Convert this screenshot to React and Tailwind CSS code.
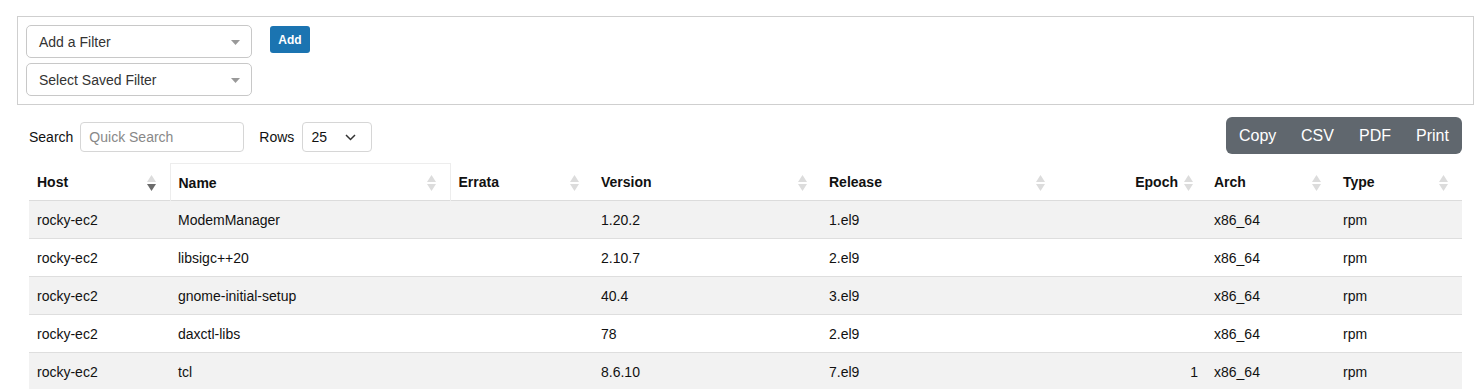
import React from "react";

const columns = [
  { key: "host", label: "Host", width: "w-[141px]", sorted: true },
  { key: "name", label: "Name", width: "w-[280px]", focused: true },
  { key: "errata", label: "Errata", width: "w-[143px]" },
  { key: "version", label: "Version", width: "w-[228px]" },
  { key: "release", label: "Release", width: "w-[238px]" },
  { key: "epoch", label: "Epoch", width: "w-[147px]", right: true },
  { key: "arch", label: "Arch", width: "w-[129px]" },
  { key: "type", label: "Type", width: "w-[127px]" },
];

const rows = [
  { host: "rocky-ec2", name: "ModemManager", errata: "", version: "1.20.2", release: "1.el9", epoch: "", arch: "x86_64", type: "rpm" },
  { host: "rocky-ec2", name: "libsigc++20", errata: "", version: "2.10.7", release: "2.el9", epoch: "", arch: "x86_64", type: "rpm" },
  { host: "rocky-ec2", name: "gnome-initial-setup", errata: "", version: "40.4", release: "3.el9", epoch: "", arch: "x86_64", type: "rpm" },
  { host: "rocky-ec2", name: "daxctl-libs", errata: "", version: "78", release: "2.el9", epoch: "", arch: "x86_64", type: "rpm" },
  { host: "rocky-ec2", name: "tcl", errata: "", version: "8.6.10", release: "7.el9", epoch: "1", arch: "x86_64", type: "rpm" },
];

// petit losange de tri (haut / bas)
function SortIcon({ desc }) {
  return (
    <svg width="9" height="16" viewBox="0 0 9 16" className="shrink-0">
      <path d="M4.5 0 L9 7 L0 7 Z" fill="#dcdcdc" />
      <path d="M0 9 L9 9 L4.5 16 Z" fill={desc ? "#6b6b6b" : "#dcdcdc"} />
    </svg>
  );
}

function Caret() {
  return (
    <svg width="9" height="5" viewBox="0 0 9 5">
      <path d="M0 0 L9 0 L4.5 5 Z" fill="#999" />
    </svg>
  );
}

function FilterSelect({ label }) {
  return (
    <div className="flex h-[33px] w-[226px] items-center justify-between rounded-[5px] border border-[#c8c8c8] bg-white pl-[12px] pr-[11px] pt-[1px] text-[14px] text-[#333]">
      <span>{label}</span>
      <Caret />
    </div>
  );
}

function FilterBox() {
  return (
    <div className="ml-[17px] mt-[16px] w-[1457px] border border-[#cfcfcf] px-[8px] pb-[8px] pt-[8px]">
      <div className="flex items-start gap-[18px]">
        <div className="flex flex-col gap-[5px]">
          <FilterSelect label="Add a Filter" />
          <FilterSelect label="Select Saved Filter" />
        </div>
        <button className="mt-[1px] h-[27px] w-[40px] rounded-[3px] bg-[#1b74b1] text-[12px] font-bold text-white">
          Add
        </button>
      </div>
    </div>
  );
}

function Toolbar() {
  return (
    <div className="ml-[29px] mr-[21px] mt-[12px] flex items-center justify-between">
      <div className="flex items-center pt-[3px] text-[14px] text-[#111]">
        <span className="mr-[7px]">Search</span>
        <div className="flex h-[30px] w-[164px] items-center rounded-[4px] border border-[#d6d6d6] pl-[8px] text-[14px] text-[#888]">
          Quick Search
        </div>
        <span className="ml-[15px] mr-[8px]">Rows</span>
        <div className="flex h-[30px] w-[70px] items-center justify-between rounded-[4px] border border-[#d6d6d6] pl-[8px] pr-[15px]">
          <span>25</span>
          <svg width="11" height="7" viewBox="0 0 11 7">
            <path d="M1 1 L5.5 5.5 L10 1" fill="none" stroke="#333" strokeWidth="1.5" />
          </svg>
        </div>
      </div>
      <div className="flex h-[37px] w-[236px] items-center rounded-[6px] bg-[#60676e] pl-[13px] text-[16px] text-white">
        <span className="w-[62px]">Copy</span>
        <span className="w-[58px]">CSV</span>
        <span className="w-[57px]">PDF</span>
        <span>Print</span>
      </div>
    </div>
  );
}

function PackageTable() {
  return (
    <table className="ml-[29px] mt-[9px] w-[1433px] table-fixed border-collapse text-[14px] text-[#111]">
      <thead>
        <tr className="h-[37px] border-b border-[#dcdcdc]">
          {columns.map((col) => (
            <th
              key={col.key}
              className={`${col.width} p-0 pt-[2px] text-left font-bold ${
                col.focused ? "border-x border-t border-[#ededed]" : ""
              }`}
            >
              {col.right ? (
                <div className="flex items-center justify-end gap-[6px] pr-[13px]">
                  <span>{col.label}</span>
                  <SortIcon />
                </div>
              ) : (
                <div className="flex items-center justify-between pl-[8px] pr-[14px]">
                  <span>{col.label}</span>
                  <SortIcon desc={col.sorted} />
                </div>
              )}
            </th>
          ))}
        </tr>
      </thead>
      <tbody>
        {rows.map((row, i) => (
          <tr
            key={i}
            className={`h-[38px] border-b border-[#dedede] ${i % 2 === 0 ? "bg-[#f2f2f2]" : "bg-white"}`}
          >
            {columns.map((col) => (
              <td
                key={col.key}
                className={`px-[8px] pb-0 pt-[1px] ${col.right ? "text-right" : "text-left"}`}
              >
                {row[col.key]}
              </td>
            ))}
          </tr>
        ))}
      </tbody>
    </table>
  );
}

export default function App() {
  return (
    <main
      className="min-h-[389px] bg-white"
      style={{ fontFamily: '"Liberation Sans", Arial, sans-serif' }}
    >
      <FilterBox />
      <Toolbar />
      <PackageTable />
    </main>
  );
}
